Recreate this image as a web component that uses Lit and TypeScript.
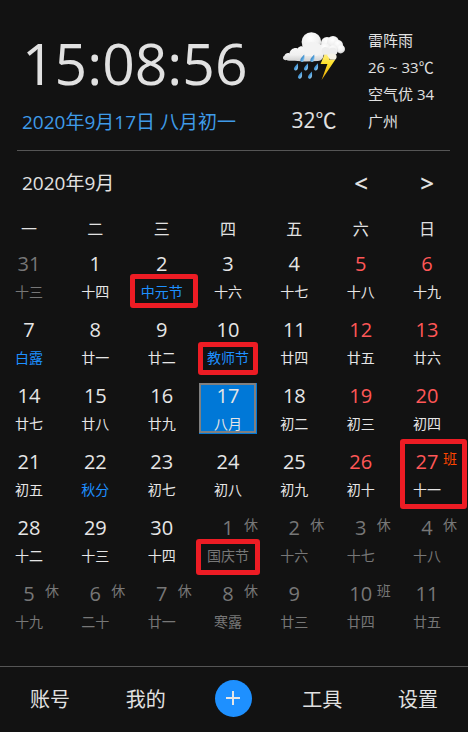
import { LitElement, html, css, nothing } from "lit";
import { customElement, property, state } from "lit/decorators.js";
import { classMap } from "lit/directives/class-map.js";
import { styleMap } from "lit/directives/style-map.js";

interface Day {
  n: number;
  lunar: string;
  other?: boolean;
  term?: boolean;
  badge?: string;
  /** Highlight frame around part of the cell: x, y, width, height. */
  mark?: [number, number, number, number];
}

const WEEKDAYS = ["一", "二", "三", "四", "五", "六", "日"];

const WEEKS: Day[][] = [
  [
    { n: 31, lunar: "十三", other: true },
    { n: 1, lunar: "十四" },
    { n: 2, lunar: "中元节", term: true, mark: [-3, 23, 68, 34] },
    { n: 3, lunar: "十六" },
    { n: 4, lunar: "十七" },
    { n: 5, lunar: "十八" },
    { n: 6, lunar: "十九" },
  ],
  [
    { n: 7, lunar: "白露", term: true },
    { n: 8, lunar: "廿一" },
    { n: 9, lunar: "廿二" },
    { n: 10, lunar: "教师节", term: true, mark: [-1, 25, 60, 33] },
    { n: 11, lunar: "廿四" },
    { n: 12, lunar: "廿五" },
    { n: 13, lunar: "廿六" },
  ],
  [
    { n: 14, lunar: "廿七" },
    { n: 15, lunar: "廿八" },
    { n: 16, lunar: "廿九" },
    { n: 17, lunar: "八月" },
    { n: 18, lunar: "初二" },
    { n: 19, lunar: "初三" },
    { n: 20, lunar: "初四" },
  ],
  [
    { n: 21, lunar: "初五" },
    { n: 22, lunar: "秋分", term: true },
    { n: 23, lunar: "初七" },
    { n: 24, lunar: "初八" },
    { n: 25, lunar: "初九" },
    { n: 26, lunar: "初十" },
    { n: 27, lunar: "十一", badge: "班", mark: [2, -10, 67, 70] },
  ],
  [
    { n: 28, lunar: "十二" },
    { n: 29, lunar: "十三" },
    { n: 30, lunar: "十四" },
    { n: 1, lunar: "国庆节", other: true, badge: "休", mark: [-3, 24, 64, 36] },
    { n: 2, lunar: "十六", other: true, badge: "休" },
    { n: 3, lunar: "十七", other: true, badge: "休" },
    { n: 4, lunar: "十八", other: true, badge: "休" },
  ],
  [
    { n: 5, lunar: "十九", other: true, badge: "休" },
    { n: 6, lunar: "二十", other: true, badge: "休" },
    { n: 7, lunar: "廿一", other: true, badge: "休" },
    { n: 8, lunar: "寒露", other: true, badge: "休" },
    { n: 9, lunar: "廿三", other: true },
    { n: 10, lunar: "廿四", other: true, badge: "班" },
    { n: 11, lunar: "廿五", other: true },
  ],
];

@customElement("storm-icon")
class StormIcon extends LitElement {
  static styles = css`
    :host {
      display: block;
    }
    svg {
      display: block;
      width: 64px;
      height: 50px;
    }
  `;

  render() {
    return html`<svg viewBox="0 0 64 50" role="img" aria-label="雷阵雨">
      <defs>
        <radialGradient id="puff" cx="0.45" cy="0.3" r="0.75">
          <stop offset="0" stop-color="#ffffff" />
          <stop offset="0.6" stop-color="#f0f0f0" />
          <stop offset="1" stop-color="#c9c9c9" />
        </radialGradient>
        <linearGradient id="base" x1="0" y1="0" x2="0" y2="1">
          <stop offset="0" stop-color="#fafafa" />
          <stop offset="0.6" stop-color="#f0f0f0" />
          <stop offset="1" stop-color="#cfcfcf" />
        </linearGradient>
        <linearGradient id="bolt" x1="0" y1="0" x2="0" y2="1">
          <stop offset="0" stop-color="#fff09a" />
          <stop offset="0.4" stop-color="#ffe32e" />
          <stop offset="1" stop-color="#e6a400" />
        </linearGradient>
        <linearGradient id="drop" x1="0" y1="0" x2="1" y2="1">
          <stop offset="0" stop-color="#1d5f9e" />
          <stop offset="0.55" stop-color="#4f9fdb" />
          <stop offset="1" stop-color="#c6e8fa" />
        </linearGradient>
        <path id="rain" d="M4.2 0 C4.6 2.6 4.8 5 3.6 6.6 C2.6 7.8 .6 7.4 .3 5.8 C0 4.2 2.6 2 4.2 0Z" />
      </defs>
      <g fill="url(#puff)">
        <circle cx="45" cy="12" r="6" />
        <circle cx="51" cy="11" r="6" />
        <circle cx="56" cy="14" r="5" />
        <circle cx="58.6" cy="18" r="4.4" />
        <circle cx="43" cy="18" r="6" />
        <circle cx="51" cy="19" r="5" />
      </g>
      <path
        fill="url(#base)"
        d="M3 29 C.5 29 .4 25.6 2.6 24.6 C3 22.6 5.5 21.6 7.4 22.4 C8.2 18.2 12.4 16 15.6 17.4 C17.6 15.2 19.4 15 21 15.6 L38 14 C40 17 42 19.5 41.6 23 C41.6 27 39.6 29.8 36 30 L24 30.4 C18 30.6 13 29.6 9 29.8 C6.6 29.8 4.6 29.6 3 29Z"
      />
      <circle cx="29.4" cy="11" r="9.8" fill="url(#puff)" />
      <path fill="#f3f3f3" d="M20.6 14 Q30 8 39.2 14 Q40 22 35 25 L23 25Z" />
      <path fill="url(#bolt)" d="M43.4 21 L38.6 33 L45.4 33 L39.6 49 L53.4 28.6 L47 28.6 L51 21Z" />
      <path
        fill="#ededed"
        d="M40 18 C42 15 46 16 47 18 C51 15 55 17 54.4 20 C56 21 55 24 52 24 L42 23.6 C39.4 23 39 20 40 18Z"
      />
      <path fill="#f5f2e6" d="M45 24 Q48 21 54 23.6 Q55.6 27 53 28.8 L48 28.4Z" />
      <g fill="url(#drop)">
        <use href="#rain" x="18" y="23.6" />
        <use href="#rain" x="28" y="23.6" />
        <use href="#rain" x="11.6" y="32.2" />
        <use href="#rain" x="21.6" y="32.2" />
        <use href="#rain" x="31.6" y="32.2" />
        <use href="#rain" x="15.6" y="40.4" />
        <use href="#rain" x="25.6" y="40.4" />
      </g>
    </svg>`;
  }
}

@customElement("day-cell")
class DayCell extends LitElement {
  @property({ attribute: false }) day!: Day;
  @property({ type: Boolean }) weekend = false;
  @property({ type: Boolean }) selected = false;

  static styles = css`
    :host {
      display: block;
      position: relative;
    }
    button {
      display: flex;
      flex-direction: column;
      align-items: center;
      gap: 5px;
      width: 100%;
      height: 51px;
      margin: 0;
      padding: 0;
      border: 0;
      background: none;
      color: #e6e6e6;
      font: inherit;
      white-space: nowrap;
      cursor: pointer;
    }
    .number {
      font-size: 20px;
      line-height: 26px;
    }
    .lunar {
      font-size: 14px;
      line-height: 20px;
    }
    .weekend .number {
      color: #ff5757;
    }
    .term .lunar {
      color: #1e90ff;
    }
    .selected {
      background: #0078d7;
      box-shadow: inset -1px -1px #0078d7, inset 2px 2px #808080, inset -3px -3px #808080;
    }
    .badge {
      position: absolute;
      top: 0;
      left: 45px;
      font-size: 14px;
      line-height: 20px;
      color: #ff4500;
      pointer-events: none;
    }
    .other,
    .badge.muted {
      color: #777777;
    }
    .mark {
      position: absolute;
      box-sizing: border-box;
      border: 5px solid #ed1c24;
      border-radius: 3px;
      pointer-events: none;
    }
  `;

  render() {
    const { n, lunar, other, term, badge, mark } = this.day;
    const classes = {
      other: !!other,
      term: !!term,
      weekend: this.weekend && !other,
      selected: this.selected,
    };
    return html`
      <button class=${classMap(classes)} aria-pressed=${this.selected}>
        <span class="number">${n}</span>
        <span class="lunar">${lunar}</span>
      </button>
      ${badge ? html`<span class=${classMap({ badge: true, muted: !!other })}>${badge}</span>` : nothing}
      ${mark
        ? html`<span
            class="mark"
            style=${styleMap({
              left: `${mark[0]}px`,
              top: `${mark[1]}px`,
              width: `${mark[2]}px`,
              height: `${mark[3]}px`,
            })}
          ></span>`
        : nothing}
    `;
  }
}

@customElement("app-root")
class AppRoot extends LitElement {
  @state() private selected = "2-3";

  static styles = css`
    :host {
      display: flex;
      flex-direction: column;
      min-height: 100vh;
      overflow: hidden;
      box-sizing: border-box;
      background: #121212;
      color: #e1e1e1;
      font-family: "Open Sans", "Noto Sans CJK SC", sans-serif;
      font-size: 20px;
    }
    button {
      margin: 0;
      padding: 0;
      border: 0;
      background: none;
      color: inherit;
      font: inherit;
      cursor: pointer;
    }
    header {
      display: flex;
      justify-content: space-between;
      margin: 0 18px 0 17px;
      padding: 26px 0 14px 5px;
      border-bottom: 1px solid #555555;
      white-space: nowrap;
    }
    .clock {
      display: flex;
      flex-direction: column;
      gap: 8px;
    }
    .time {
      font-size: 57px;
      line-height: 74px;
    }
    .date {
      font-size: 19px;
      line-height: 28px;
      color: #3f9be8;
    }
    .weather {
      display: flex;
      gap: 22px;
    }
    .now {
      display: flex;
      flex-direction: column;
      align-items: center;
      justify-content: space-between;
      padding: 5px 0 2px;
    }
    .now .temp {
      font-size: 21px;
      line-height: 28px;
    }
    .details {
      display: flex;
      flex-direction: column;
      width: 82px;
      margin: 0;
      padding: 1px 0 0;
      list-style: none;
      font-size: 15px;
      line-height: 27px;
    }
    .month {
      display: flex;
      align-items: center;
      padding: 16px 12px 0 22px;
    }
    .month h1 {
      flex: 1;
      margin: 0;
      font-size: 19px;
      font-weight: 400;
      line-height: 32px;
    }
    .step {
      width: 58px;
      font-size: 24px;
      font-weight: 600;
      line-height: 32px;
    }
    .step + .step {
      margin-left: 8px;
    }
    table {
      display: block;
      margin-top: 16px;
      padding-right: 12px;
    }
    thead,
    tbody {
      display: flex;
      flex-direction: column;
      gap: 15px;
    }
    thead {
      margin-bottom: 8px;
    }
    tr {
      display: flex;
      justify-content: space-between;
    }
    th,
    td {
      display: block;
      width: 58px;
      padding: 0;
    }
    th {
      font-size: 16px;
      font-weight: 400;
      line-height: 28px;
      text-align: center;
    }
    nav {
      display: flex;
      align-items: center;
      justify-content: space-between;
      box-sizing: border-box;
      height: 66px;
      margin-top: auto;
      padding: 0 30px 3px;
      border-top: 1px solid #555555;
    }
    .add {
      display: grid;
      place-items: center;
      width: 37px;
      height: 37px;
      margin: 0 -5px 0 -7px;
      border-radius: 50%;
      background: #1e90ff;
    }
    .add svg {
      width: 14px;
      height: 14px;
    }
  `;

  render() {
    return html`
      <header>
        <div class="clock">
          <time class="time">15:08:56</time>
          <span class="date">2020年9月17日 八月初一</span>
        </div>
        <div class="weather">
          <div class="now">
            <storm-icon></storm-icon>
            <span class="temp">32℃</span>
          </div>
          <ul class="details">
            <li>雷阵雨</li>
            <li>26 ~ 33℃</li>
            <li>空气优 34</li>
            <li>广州</li>
          </ul>
        </div>
      </header>
      <div class="month">
        <h1>2020年9月</h1>
        <button class="step" aria-label="上个月">&lt;</button>
        <button class="step" aria-label="下个月">&gt;</button>
      </div>
      <table>
        <thead>
          <tr>
            ${WEEKDAYS.map((d) => html`<th scope="col">${d}</th>`)}
          </tr>
        </thead>
        <tbody>
          ${WEEKS.map(
            (week, w) => html`<tr>
              ${week.map(
                (day, d) => html`<td>
                  <day-cell
                    .day=${day}
                    ?weekend=${d > 4}
                    ?selected=${this.selected === `${w}-${d}`}
                    @click=${() => (this.selected = `${w}-${d}`)}
                  ></day-cell>
                </td>`
              )}
            </tr>`
          )}
        </tbody>
      </table>
      <nav>
        <button>账号</button>
        <button>我的</button>
        <button class="add" aria-label="添加">
          <svg viewBox="0 0 14 14" aria-hidden="true">
            <path d="M7 0V14M0 7H14" stroke="#e6e6e6" stroke-width="2" />
          </svg>
        </button>
        <button>工具</button>
        <button>设置</button>
      </nav>
    `;
  }
}
